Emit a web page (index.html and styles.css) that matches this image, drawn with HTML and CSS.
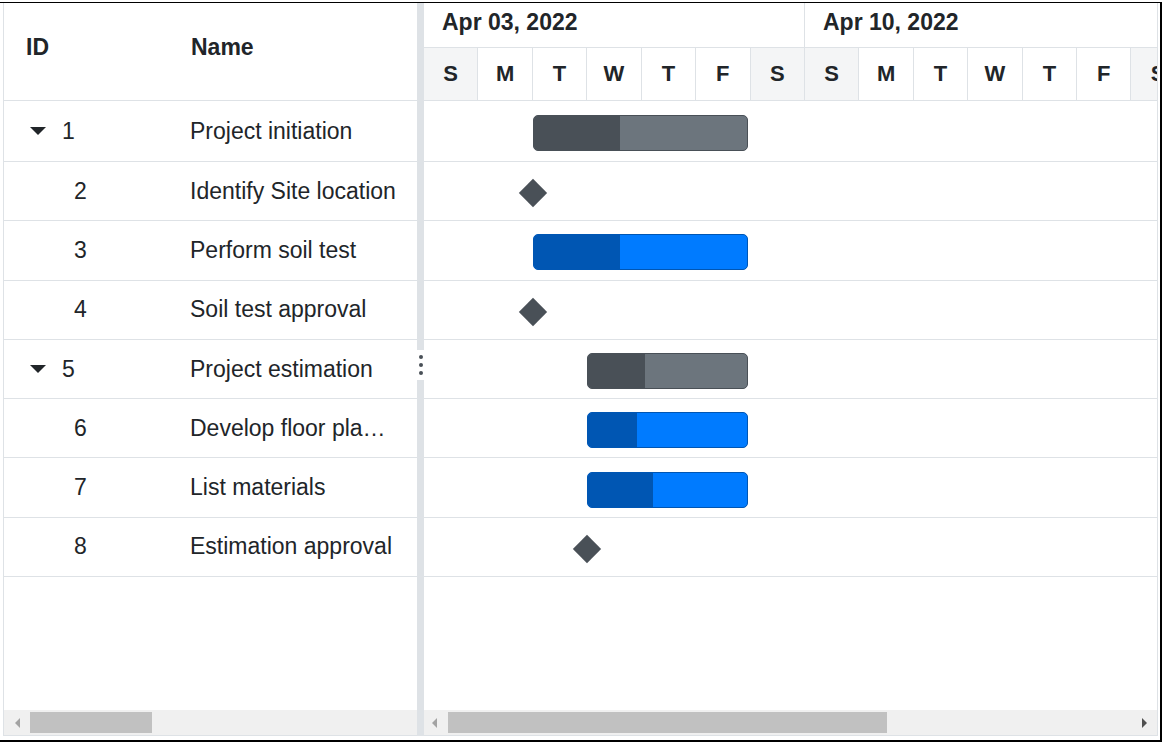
FILE: index.html
```html
<!DOCTYPE html>
<html lang="en">
<head>
<meta charset="utf-8">
<title>Gantt</title>
<link rel="stylesheet" href="styles.css">
</head>
<body>
<div class="frame">
  <div class="gantt">
    <div class="pane grid-pane">
      <div class="grid-header">
        <div class="col-id">ID</div>
        <div class="col-name">Name</div>
      </div>
      <div class="grid-body">
        <div class="grid-row"><div class="col-id"><span class="expander"><svg width="16" height="8" viewBox="0 0 16 8"><polygon points="0,0 16,0 8,8" fill="#212529"/></svg></span><span>1</span></div><div class="col-name">Project initiation</div></div>
        <div class="grid-row"><div class="col-id"><span class="indent"></span><span>2</span></div><div class="col-name">Identify Site location</div></div>
        <div class="grid-row"><div class="col-id"><span class="indent"></span><span>3</span></div><div class="col-name">Perform soil test</div></div>
        <div class="grid-row"><div class="col-id"><span class="indent"></span><span>4</span></div><div class="col-name">Soil test approval</div></div>
        <div class="grid-row"><div class="col-id"><span class="expander"><svg width="16" height="8" viewBox="0 0 16 8"><polygon points="0,0 16,0 8,8" fill="#212529"/></svg></span><span>5</span></div><div class="col-name">Project estimation</div></div>
        <div class="grid-row"><div class="col-id"><span class="indent"></span><span>6</span></div><div class="col-name">Develop floor plan for estimation</div></div>
        <div class="grid-row"><div class="col-id"><span class="indent"></span><span>7</span></div><div class="col-name">List materials</div></div>
        <div class="grid-row"><div class="col-id"><span class="indent"></span><span>8</span></div><div class="col-name">Estimation approval</div></div>
      </div>
      <div class="hscroll left-scroll">
        <span class="arrow arrow-left"></span>
        <span class="thumb thumb-left"></span>
      </div>
    </div>

    <div class="splitter">
      <div class="splitter-handle"><span class="dot"></span><span class="dot"></span><span class="dot"></span></div>
    </div>

    <div class="pane chart-pane">
      <div class="timeline">
        <div class="tier tier-top">
          <div class="week">Apr 03, 2022</div>
          <div class="week">Apr 10, 2022</div>
        </div>
        <div class="tier tier-days">
          <div class="day weekend">S</div><div class="day">M</div><div class="day">T</div><div class="day">W</div><div class="day">T</div><div class="day">F</div><div class="day weekend">S</div>
          <div class="day weekend">S</div><div class="day">M</div><div class="day">T</div><div class="day">W</div><div class="day">T</div><div class="day">F</div><div class="day weekend">S</div>
        </div>
      </div>
      <div class="chart-body">
        <div class="chart-row"><div class="bar parent" style="left:109px;width:215px"><div class="progress" style="width:86px"></div></div></div>
        <div class="chart-row"><div class="milestone" style="left:98.5px"></div></div>
        <div class="chart-row"><div class="bar child" style="left:109px;width:215px"><div class="progress" style="width:86px"></div></div></div>
        <div class="chart-row"><div class="milestone" style="left:98.5px"></div></div>
        <div class="chart-row"><div class="bar parent" style="left:163px;width:161px"><div class="progress" style="width:57px"></div></div></div>
        <div class="chart-row"><div class="bar child" style="left:163px;width:161px"><div class="progress" style="width:49px"></div></div></div>
        <div class="chart-row"><div class="bar child" style="left:163px;width:161px"><div class="progress" style="width:65px"></div></div></div>
        <div class="chart-row"><div class="milestone" style="left:153px"></div></div>
      </div>
      <div class="hscroll right-scroll">
        <span class="arrow arrow-left"></span>
        <span class="thumb thumb-right"></span>
        <span class="spacer"></span>
        <span class="arrow arrow-right"></span>
      </div>
    </div>
  </div>
</div>
</body>
</html>
```

FILE: styles.css
```css
html, body {
  margin: 0;
  padding: 0;
  background: #ffffff;
}

body {
  font-family: "Liberation Sans", Arial, sans-serif;
  color: #212529;
}

.frame {
  box-sizing: border-box;
  margin-top: 2px;
  width: 1162px;
  height: 740px;
  border-top: 1px solid #000;
  border-right: 2px solid #000;
  border-bottom: 2px solid #000;
  padding-left: 3px;
}

.gantt {
  box-sizing: border-box;
  width: 1155px;
  height: 733px;
  display: flex;
  border-left: 1px solid #dee2e6;
  border-right: 1px solid #dee2e6;
  border-bottom: 1px solid #dee2e6;
  background: #fff;
}

.pane {
  display: flex;
  flex-direction: column;
  overflow: hidden;
}

.grid-pane {
  width: 413px;
  flex: 0 0 413px;
}

.chart-pane {
  width: 733px;
  flex: 0 0 733px;
}

/* grid */
.grid-header {
  box-sizing: border-box;
  height: 98px;
  flex: 0 0 98px;
  display: flex;
  align-items: center;
  padding-bottom: 8px;
  border-bottom: 1px solid #dee2e6;
  font-size: 23px;
  font-weight: bold;
}

.grid-header .col-id {
  padding-left: 22px;
}

.grid-header .col-name {
  padding-left: 22px;
}

.col-id {
  box-sizing: border-box;
  width: 165px;
  flex: 0 0 165px;
  display: flex;
  align-items: center;
  padding-left: 21px;
}

.col-name {
  box-sizing: border-box;
  flex: 1 1 auto;
  min-width: 0;
  padding-left: 21px;
  padding-right: 21px;
  white-space: nowrap;
  overflow: hidden;
  text-overflow: ellipsis;
}

.grid-body {
  flex: 1 1 auto;
}

.grid-row {
  box-sizing: border-box;
  height: 59.3px;
  display: flex;
  align-items: center;
  border-bottom: 1px solid #dee2e6;
  font-size: 23px;
}

.grid-row:first-child,
.chart-row:first-child {
  height: 61px;
}

.expander {
  display: flex;
  align-items: center;
  width: 37px;
  flex: 0 0 37px;
  padding-left: 5px;
  box-sizing: border-box;
}

.indent {
  width: 49px;
  flex: 0 0 49px;
}

/* splitter */
.splitter {
  position: relative;
  width: 7px;
  flex: 0 0 7px;
  background: #dee2e6;
}

.splitter-handle {
  position: absolute;
  left: 0;
  top: 347px;
  width: 7px;
  height: 30px;
  background: #fff;
  display: flex;
  flex-direction: column;
  align-items: center;
  justify-content: center;
  gap: 4px;
}

.dot {
  width: 4px;
  height: 4px;
  border-radius: 50%;
  background: #495057;
}

/* timeline */
.timeline {
  flex: 0 0 98px;
  height: 98px;
}

.tier {
  display: flex;
  box-sizing: border-box;
  border-bottom: 1px solid #dee2e6;
}

.tier-top {
  height: 45px;
  align-items: stretch;
}

.week {
  box-sizing: border-box;
  flex: 0 0 381px;
  width: 381px;
  border-right: 1px solid #dee2e6;
  padding-left: 18px;
  padding-bottom: 6px;
  display: flex;
  align-items: center;
  font-size: 23px;
  font-weight: bold;
  white-space: nowrap;
}

.tier-days {
  height: 53px;
}

.day {
  box-sizing: border-box;
  flex: 0 0 54.43px;
  width: 54.43px;
  border-right: 1px solid #dee2e6;
  display: flex;
  align-items: center;
  justify-content: center;
  font-size: 22px;
  font-weight: bold;
}

.day.weekend {
  background: #f4f5f6;
}

/* chart body */
.chart-body {
  flex: 1 1 auto;
}

.chart-row {
  position: relative;
  box-sizing: border-box;
  height: 59.3px;
  border-bottom: 1px solid #dee2e6;
}

.bar {
  position: absolute;
  top: calc(50% - 16px);
  height: 36px;
  box-sizing: border-box;
  border-radius: 5px;
  overflow: hidden;
}

.bar .progress {
  height: 100%;
}

.bar.parent {
  background: #6c757d;
  border: 1px solid #495057;
}

.bar.parent .progress {
  background: #495057;
}

.bar.child {
  background: #007bff;
  border: 1px solid #0056b3;
}

.bar.child .progress {
  background: #0056b3;
}

.milestone {
  position: absolute;
  top: calc(50% - 8px);
  width: 20px;
  height: 20px;
  background: #495057;
  transform: rotate(45deg);
}

/* scrollbars */
.hscroll {
  flex: 0 0 25px;
  height: 25px;
  display: flex;
  align-items: center;
  background: #f0f0f0;
}

.arrow {
  width: 0;
  height: 0;
  border-top: 5.5px solid transparent;
  border-bottom: 5.5px solid transparent;
}

.arrow-left {
  border-right: 5px solid #a3a3a3;
}

.arrow-right {
  border-left: 5px solid #505050;
}

.thumb {
  height: 21px;
  background: #c1c1c1;
}

.left-scroll .arrow-left {
  margin-left: 11px;
}

.thumb-left {
  width: 122px;
  margin-left: 10px;
}

.right-scroll .arrow-left {
  margin-left: 8px;
}

.thumb-right {
  width: 439px;
  margin-left: 11px;
}

.spacer {
  flex: 1 1 auto;
}

.right-scroll .arrow-right {
  margin-right: 10px;
}
```
